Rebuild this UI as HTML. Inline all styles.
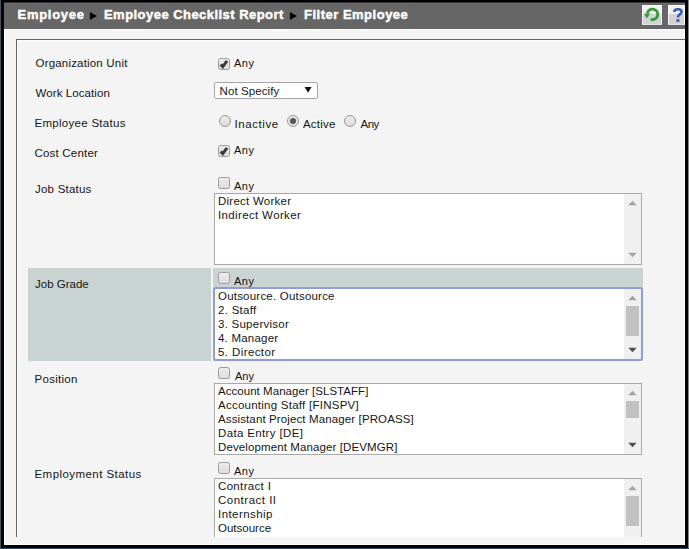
<!DOCTYPE html>
<html><head><meta charset="utf-8"><style>
html,body{margin:0;padding:0;background:#000;width:689px;height:549px;overflow:hidden}
svg{display:block}
text{font-family:"Liberation Sans", sans-serif}
</style></head><body>
<svg width="689" height="549" viewBox="0 0 689 549" shape-rendering="crispEdges">
<defs><linearGradient id="cb" x1="0" y1="0" x2="0" y2="1"><stop offset="0" stop-color="#ececec"/><stop offset="1" stop-color="#dcdcdc"/></linearGradient></defs>
<rect x="0" y="0" width="689" height="549" fill="#000" />
<rect x="0" y="0" width="1" height="549" fill="#3e5561" />
<rect x="688" y="0" width="1" height="549" fill="#858585" />
<rect x="0" y="548" width="689" height="1" fill="#2b4a60" />
<rect x="4" y="2" width="681" height="27" fill="#666666" />
<rect x="4" y="2" width="681" height="1" fill="#333333" />
<rect x="4" y="3" width="681" height="1" fill="#6c6c6c" />
<rect x="4" y="29" width="681" height="516" fill="#ffffff" />
<rect x="5" y="30" width="679" height="514" fill="#f4f4f4" />
<rect x="16" y="39" width="669" height="1" fill="#666666" />
<rect x="17" y="40" width="667" height="1" fill="#ffffff" />
<rect x="16" y="39" width="1" height="498" fill="#666666" />
<rect x="17" y="40" width="1" height="497" fill="#ffffff" />
<text x="17.50" y="19" font-size="13" font-weight="bold" fill="#ffffff" stroke="#ffffff" stroke-width="0.45" textLength="66.42" lengthAdjust="spacing">Employee</text>
<text x="104.00" y="19" font-size="13" font-weight="bold" fill="#ffffff" stroke="#ffffff" stroke-width="0.45" textLength="179.33" lengthAdjust="spacing">Employee Checklist Report</text>
<text x="304.00" y="19" font-size="13" font-weight="bold" fill="#ffffff" stroke="#ffffff" stroke-width="0.45" textLength="103.81" lengthAdjust="spacing">Filter Employee</text>
<path d="M89.9 12.1 L96.9 16 L89.9 19.9 Z" fill="#000" shape-rendering="geometricPrecision"/>
<path d="M289.9 12.1 L296.9 16 L289.9 19.9 Z" fill="#000" shape-rendering="geometricPrecision"/>
<rect x="642" y="5" width="20" height="20" fill="#f7f7f7" />
<rect x="643" y="6" width="18" height="8" fill="#f1f1f1" />
<rect x="643" y="14" width="18" height="10" fill="#d2d2d2" />
<rect x="642" y="24" width="20" height="1" fill="#e2e2e2" />
<rect x="668" y="5" width="17" height="20" fill="#f7f7f7" />
<rect x="669" y="6" width="15" height="8" fill="#f1f1f1" />
<rect x="669" y="14" width="15" height="10" fill="#d2d2d2" />
<rect x="668" y="24" width="17" height="1" fill="#e2e2e2" />
<g shape-rendering="geometricPrecision">
<path d="M647.33 13.39 A5.25 5.25 0 1 1 650.7 19.23" fill="none" stroke="#2f9a35" stroke-width="2.7"/>
<path d="M644.2 13.4 L650.2 13.4 L646.8 18.4 Z" fill="#2f9a35" />
<path d="M674.3 11.9 C674.3 9.9 676.0 9.2 678.0 9.2 C680.2 9.2 681.6 10.3 681.6 11.8 C681.6 13.5 680.2 14.2 679.1 15.0 C678.3 15.6 678.0 16.3 678.0 17.6" fill="none" stroke="#3858c8" stroke-width="2.6"/>
<rect x="676.4" y="19.2" width="3.1" height="2.7" fill="#3858c8"/>
</g>
<text x="35.50" y="67" font-size="11.5" font-weight="normal" fill="#151515" textLength="91.86" lengthAdjust="spacing">Organization Unit</text>
<text x="35.50" y="97" font-size="11.5" font-weight="normal" fill="#151515" textLength="74.30" lengthAdjust="spacing">Work Location</text>
<text x="34.50" y="127" font-size="11.5" font-weight="normal" fill="#151515" textLength="90.94" lengthAdjust="spacing">Employee Status</text>
<text x="34.50" y="157" font-size="11.5" font-weight="normal" fill="#151515" textLength="63.36" lengthAdjust="spacing">Cost Center</text>
<text x="35.00" y="193" font-size="11.5" font-weight="normal" fill="#151515" textLength="56.34" lengthAdjust="spacing">Job Status</text>
<rect x="28" y="268" width="183" height="93" fill="#c9d3d1" />
<rect x="213" y="268" width="430" height="93" fill="#c9d3d1" />
<text x="35.00" y="288" font-size="11.5" font-weight="normal" fill="#151515" textLength="53.70" lengthAdjust="spacing">Job Grade</text>
<text x="34.50" y="383" font-size="11.5" font-weight="normal" fill="#151515" textLength="42.92" lengthAdjust="spacing">Position</text>
<text x="34.50" y="478" font-size="11.5" font-weight="normal" fill="#151515" textLength="106.72" lengthAdjust="spacing">Employment Status</text>
<g shape-rendering="geometricPrecision">
<rect x="218.5" y="58.5" width="11" height="11" rx="2" fill="url(#cb)" stroke="#9c9c9c" stroke-width="1"/>
<path d="M220.7 64.4 L222.8 66.7 L227.0 60.9" fill="none" stroke="#3a3a3a" stroke-width="2.9" stroke-linecap="butt" stroke-linejoin="miter"/>
</g>
<text x="234.00" y="67" font-size="11" font-weight="normal" fill="#111" textLength="19.97" lengthAdjust="spacing">Any</text>
<g shape-rendering="geometricPrecision"><rect x="214.5" y="82.5" width="103" height="16" rx="1.5" fill="#fff" stroke="#a6a6a6"/></g>
<text x="219.50" y="95" font-size="11.5" font-weight="normal" fill="#151515" textLength="59.81" lengthAdjust="spacing">Not Specify</text>
<path d="M304.6 87.0 L311.6 87.0 L308.1 92.8 Z" fill="#111" shape-rendering="geometricPrecision"/>
<g shape-rendering="geometricPrecision">
<circle cx="225" cy="121" r="5.5" fill="url(#cb)" stroke="#999" stroke-width="1"/>
</g>
<text x="234.50" y="128" font-size="11.5" font-weight="normal" fill="#151515" textLength="43.64" lengthAdjust="spacing">Inactive</text>
<g shape-rendering="geometricPrecision">
<circle cx="293" cy="121" r="5.5" fill="url(#cb)" stroke="#999" stroke-width="1"/>
<circle cx="293" cy="121" r="3" fill="#555"/>
</g>
<text x="303.00" y="128" font-size="11.5" font-weight="normal" fill="#151515" textLength="32.33" lengthAdjust="spacing">Active</text>
<g shape-rendering="geometricPrecision">
<circle cx="350" cy="121" r="5.5" fill="url(#cb)" stroke="#999" stroke-width="1"/>
</g>
<text x="360.50" y="128" font-size="11.5" font-weight="normal" fill="#151515" textLength="18.83" lengthAdjust="spacing">Any</text>
<g shape-rendering="geometricPrecision">
<rect x="218.5" y="145.5" width="11" height="11" rx="2" fill="url(#cb)" stroke="#9c9c9c" stroke-width="1"/>
<path d="M220.7 151.4 L222.8 153.7 L227.0 147.9" fill="none" stroke="#3a3a3a" stroke-width="2.9" stroke-linecap="butt" stroke-linejoin="miter"/>
</g>
<text x="234.00" y="154" font-size="11" font-weight="normal" fill="#111" textLength="19.97" lengthAdjust="spacing">Any</text>
<g shape-rendering="geometricPrecision">
<rect x="218.5" y="177.5" width="11" height="11" rx="2" fill="url(#cb)" stroke="#9c9c9c" stroke-width="1"/>
</g>
<text x="234.00" y="190" font-size="11" font-weight="normal" fill="#111" textLength="19.97" lengthAdjust="spacing">Any</text>
<rect x="214" y="193" width="428" height="72" fill="#a9a9a9" />
<rect x="215" y="194" width="426" height="70" fill="#ffffff" />
<rect x="624" y="194" width="17" height="70" fill="#f0f0f0" />
<text x="218.00" y="205" font-size="11.5" font-weight="normal" fill="#151515" textLength="73.08" lengthAdjust="spacing">Direct Worker</text>
<text x="218.00" y="219" font-size="11.5" font-weight="normal" fill="#151515" textLength="82.77" lengthAdjust="spacing">Indirect Worker</text>
<path d="M628.3 205.3 L636.7 205.3 L632.5 200.8 Z" fill="#a3a3a3" shape-rendering="geometricPrecision"/>
<path d="M628.3 252.7 L636.7 252.7 L632.5 257.2 Z" fill="#a3a3a3" shape-rendering="geometricPrecision"/>
<g shape-rendering="geometricPrecision">
<rect x="218.5" y="272.5" width="11" height="11" rx="2" fill="url(#cb)" stroke="#9c9c9c" stroke-width="1"/>
</g>
<text x="234.00" y="285" font-size="11" font-weight="normal" fill="#111" textLength="19.97" lengthAdjust="spacing">Any</text>
<g shape-rendering="geometricPrecision"><rect x="214" y="288" width="428" height="72" rx="2" fill="#fff" stroke="#8f9cdb" stroke-width="2"/></g>
<rect x="624" y="289" width="17" height="70" fill="#f0f0f0" />
<text x="218.00" y="300" font-size="11.5" font-weight="normal" fill="#151515" textLength="116.50" lengthAdjust="spacing">Outsource. Outsource</text>
<text x="218.00" y="314" font-size="11.5" font-weight="normal" fill="#151515" textLength="38.23" lengthAdjust="spacing">2. Staff</text>
<text x="218.00" y="328" font-size="11.5" font-weight="normal" fill="#151515" textLength="70.77" lengthAdjust="spacing">3. Supervisor</text>
<text x="218.00" y="342" font-size="11.5" font-weight="normal" fill="#151515" textLength="60.19" lengthAdjust="spacing">4. Manager</text>
<text x="218.00" y="356" font-size="11.5" font-weight="normal" fill="#151515" textLength="57.05" lengthAdjust="spacing">5. Director</text>
<path d="M628.3 300.3 L636.7 300.3 L632.5 295.8 Z" fill="#a3a3a3" shape-rendering="geometricPrecision"/>
<rect x="626" y="306" width="13" height="30" fill="#c1c1c1" />
<path d="M628.3 347.7 L636.7 347.7 L632.5 352.2 Z" fill="#505050" shape-rendering="geometricPrecision"/>
<g shape-rendering="geometricPrecision">
<rect x="218.5" y="367.5" width="11" height="11" rx="2" fill="url(#cb)" stroke="#9c9c9c" stroke-width="1"/>
</g>
<text x="235.00" y="380" font-size="11" font-weight="normal" fill="#111" textLength="18.97" lengthAdjust="spacing">Any</text>
<rect x="214" y="383" width="428" height="72" fill="#a9a9a9" />
<rect x="215" y="384" width="426" height="70" fill="#ffffff" />
<rect x="624" y="384" width="17" height="70" fill="#f0f0f0" />
<text x="218.00" y="395" font-size="11.5" font-weight="normal" fill="#151515" textLength="150.36" lengthAdjust="spacing">Account Manager [SLSTAFF]</text>
<text x="218.00" y="409" font-size="11.5" font-weight="normal" fill="#151515" textLength="140.67" lengthAdjust="spacing">Accounting Staff [FINSPV]</text>
<text x="218.00" y="423" font-size="11.5" font-weight="normal" fill="#151515" textLength="195.75" lengthAdjust="spacing">Assistant Project Manager [PROASS]</text>
<text x="218.00" y="437" font-size="11.5" font-weight="normal" fill="#151515" textLength="84.89" lengthAdjust="spacing">Data Entry [DE]</text>
<text x="218.00" y="451" font-size="11.5" font-weight="normal" fill="#151515" textLength="179.41" lengthAdjust="spacing">Development Manager [DEVMGR]</text>
<path d="M628.3 395.3 L636.7 395.3 L632.5 390.8 Z" fill="#a3a3a3" shape-rendering="geometricPrecision"/>
<rect x="626" y="401" width="13" height="17" fill="#c1c1c1" />
<path d="M628.3 442.7 L636.7 442.7 L632.5 447.2 Z" fill="#505050" shape-rendering="geometricPrecision"/>
<g shape-rendering="geometricPrecision">
<rect x="218.5" y="462.5" width="11" height="11" rx="2" fill="url(#cb)" stroke="#9c9c9c" stroke-width="1"/>
</g>
<text x="234.00" y="475" font-size="11" font-weight="normal" fill="#111" textLength="19.97" lengthAdjust="spacing">Any</text>
<rect x="214" y="478" width="428" height="59" fill="#a9a9a9" />
<rect x="215" y="479" width="426" height="58" fill="#ffffff" />
<rect x="624" y="479" width="17" height="58" fill="#f0f0f0" />
<text x="218.00" y="490" font-size="11.5" font-weight="normal" fill="#151515" textLength="52.86" lengthAdjust="spacing">Contract I</text>
<text x="218.00" y="504" font-size="11.5" font-weight="normal" fill="#151515" textLength="58.06" lengthAdjust="spacing">Contract II</text>
<text x="218.00" y="518" font-size="11.5" font-weight="normal" fill="#151515" textLength="54.52" lengthAdjust="spacing">Internship</text>
<text x="218.00" y="532" font-size="11.5" font-weight="normal" fill="#151515" textLength="53.06" lengthAdjust="spacing">Outsource</text>
<path d="M628.3 490.3 L636.7 490.3 L632.5 485.8 Z" fill="#a3a3a3" shape-rendering="geometricPrecision"/>
<rect x="626" y="496" width="13" height="30" fill="#c1c1c1" />
<rect x="5" y="537" width="679" height="7" fill="#f4f4f4" />
</svg></body></html>
